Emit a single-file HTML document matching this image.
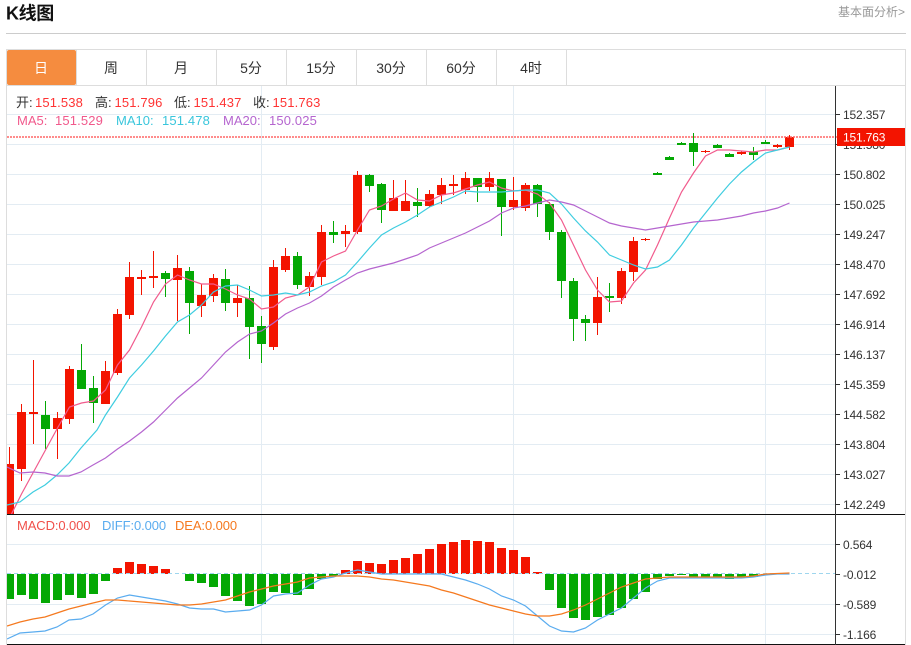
<!DOCTYPE html>
<html lang="zh"><head><meta charset="utf-8"><title>K线图</title>
<style>
html,body{margin:0;padding:0;background:#fff;width:911px;height:645px;overflow:hidden}
svg{display:block;font-family:"Liberation Sans","Noto Sans CJK SC",sans-serif}
</style></head><body>
<svg width="911" height="645" viewBox="0 0 911 645" xmlns="http://www.w3.org/2000/svg">
<defs>
<clipPath id="k"><rect x="7" y="86" width="828" height="428"/></clipPath>
<clipPath id="m"><rect x="7" y="515" width="828" height="129"/></clipPath>
</defs>
<text x="6" y="19.500" font-size="18" font-weight="bold" fill="#111" letter-spacing="-0.4">K线图</text>
<text x="838" y="16" font-size="12" fill="#999">基本面分析&gt;</text>
<path d="M6 33.5H906" stroke="#ccc" stroke-width="1"/>

<!-- frame and tabs -->
<path d="M6.5 50V645M6 49.5H906M905.5 49V645M6 85.5H906" stroke="#ddd" fill="none"/>
<rect x="7" y="50" width="69" height="35" rx="2" fill="#f58c3f"/>
<path d="M76.5 50V85M146.5 50V85M216.5 50V85M286.5 50V85M356.5 50V85M426.5 50V85M496.5 50V85M566.5 50V85" stroke="#ddd"/>
<g font-size="14" fill="#333" text-anchor="middle">
<text x="41" y="73" fill="#fff">日</text>
<text x="111" y="73">周</text>
<text x="181" y="73">月</text>
<text x="251" y="73">5分</text>
<text x="321" y="73">15分</text>
<text x="391" y="73">30分</text>
<text x="461" y="73">60分</text>
<text x="531" y="73">4时</text>
</g>

<!-- grid -->
<path d="M7 114.5H835M7 144.5H835M7 174.5H835M7 204.5H835M7 234.5H835M7 264.5H835M7 294.5H835M7 324.5H835M7 354.5H835M7 384.5H835M7 414.5H835M7 444.5H835M7 474.5H835M7 504.5H835M7 544.5H835M7 604.5H835M7 634.5H835M261.5 86V644M513.5 86V644M765.5 86V644" stroke="#e3ecf3" fill="none"/>

<!-- candles -->
<g clip-path="url(#k)" shape-rendering="crispEdges">
<path fill="none" stroke="#f31400" d="M9.5 447V464M21.5 404V481M33.5 360V444M57.5 412V459M69.5 366V424M105.5 361V404M117.5 309V375M129.5 262V319M141.5 270V295M153.5 251V288M177.5 255V321M201.5 284V317M213.5 274V302M237.5 285V317M273.5 260V350M285.5 248V272M309.5 272V296M321.5 225V285M345.5 225V247M357.5 171V234M393.5 180V211M405.5 180V211M429.5 190V207M441.5 178V204M453.5 175V195M465.5 172V194M489.5 172V191M513.5 177V210M525.5 183V211M597.5 277V335M621.5 268V304M633.5 237V281M645.5 238V241M705.5 150V153M741.5 151V155M777.5 144V148M789.5 135V150"/>
<path fill="#f31400" d="M7 464h7v50h-7zM17 412h9v57h-9zM29 412h9v2h-9zM53 418h9v11h-9zM65 369h9v50h-9zM101 371h9v33h-9zM113 314h9v59h-9zM125 277h9v38h-9zM137 277h9v2h-9zM149 276h9v2h-9zM173 268h9v12h-9zM197 295h9v11h-9zM209 278h9v18h-9zM233 298h9v5h-9zM269 267h9v80h-9zM281 256h9v14h-9zM305 276h9v11h-9zM317 232h9v45h-9zM341 231h9v3h-9zM353 175h9v57h-9zM389 198h9v13h-9zM401 201h9v10h-9zM425 194h9v12h-9zM437 185h9v10h-9zM449 184h9v2h-9zM461 178h9v12h-9zM485 178h9v9h-9zM509 200h9v7h-9zM521 185h9v23h-9zM593 297h9v26h-9zM617 271h9v27h-9zM629 241h9v31h-9zM641 239h9v1h-9zM701 151h9v1h-9zM737 152h9v2h-9zM773 145h9v2h-9zM785 137h9v10h-9z"/>
<path fill="none" stroke="#04a804" d="M45.5 401V449M81.5 344V389M93.5 376V423M165.5 271V297M189.5 267V334M225.5 269V311M249.5 286V359M261.5 316V363M297.5 252V289M333.5 221V243M369.5 174V192M381.5 183V223M417.5 188V217M477.5 178V202M501.5 179V236M537.5 184V217M549.5 202V240M561.5 230V298M573.5 278V341M585.5 315V341M609.5 283V312M657.5 172V175M669.5 156V160M681.5 142V145M693.5 133V166M717.5 144V148M729.5 153V157M753.5 147V160M765.5 140V144"/>
<path fill="#04a804" d="M41 415h9v14h-9zM77 370h9v19h-9zM89 388h9v15h-9zM161 273h9v6h-9zM185 271h9v32h-9zM221 279h9v24h-9zM245 298h9v29h-9zM257 326h9v18h-9zM293 256h9v29h-9zM329 232h9v3h-9zM365 175h9v11h-9zM377 184h9v26h-9zM413 202h9v4h-9zM473 178h9v9h-9zM497 179h9v28h-9zM533 185h9v19h-9zM545 204h9v28h-9zM557 232h9v49h-9zM569 281h9v38h-9zM581 319h9v4h-9zM605 296h9v2h-9zM653 173h9v2h-9zM665 157h9v3h-9zM677 143h9v2h-9zM689 143h9v9h-9zM713 145h9v3h-9zM725 154h9v3h-9zM749 152h9v3h-9zM761 142h9v2h-9z"/>
</g>

<!-- moving averages -->
<g clip-path="url(#k)" fill="none" stroke-width="1.2">
<polyline stroke="#f15b8d" points="9.5,518 21.5,494 33.5,472 45.5,450 57.5,428 69.5,407 81.5,403 93.5,401 105.5,390 117.5,365 129.5,350 141.5,327 153.5,302 165.5,284 177.5,275 189.5,280 201.5,284 213.5,284 225.5,289 237.5,295 249.5,299 261.5,309 273.5,307 285.5,298 297.5,295 309.5,287 321.5,262 333.5,256 345.5,251 357.5,230 369.5,210 381.5,206 393.5,199 405.5,193 417.5,200 429.5,201 441.5,195 453.5,193 465.5,189 477.5,185 489.5,182 501.5,188 513.5,191 525.5,190 537.5,194 549.5,203 561.5,220 573.5,245 585.5,270 597.5,290 609.5,302 621.5,301 633.5,283 645.5,270 657.5,245 669.5,218 681.5,192 693.5,173 705.5,156 717.5,150 729.5,150 741.5,151 753.5,152 765.5,150 777.5,150 789.5,147"/>
<polyline stroke="#3fcde0" points="7,505 20,502 33,492 45,485 57,475 69,463 81,448 97,430 105.5,415 117.5,397 129.5,378 141.5,365 153.5,351 165.5,336 177.5,322 189.5,315 201.5,305 213.5,292 225.5,286 237.5,285 249.5,290 261.5,296 273.5,295 285.5,293 297.5,295 309.5,292 321.5,286 333.5,282 345.5,275 357.5,262 369.5,248 381.5,235 393.5,228 405.5,222 417.5,215 429.5,207 441.5,202 453.5,197 465.5,191 477.5,192 489.5,192 501.5,192 513.5,191 525.5,190 537.5,190 549.5,193 561.5,204 573.5,218 585.5,231 597.5,242 609.5,255 621.5,260 633.5,265 645.5,269 657.5,267 669.5,260 681.5,245 693.5,228 705.5,213 717.5,198 729.5,184 741.5,172 753.5,162 765.5,153 777.5,150 789.5,147"/>
<polyline stroke="#b565cf" points="7,467 20,473 33,472 45,473 57,476 69,476 81,472 93,465 105.5,458 117.5,449 129.5,441 141.5,432 153.5,422 165.5,410 177.5,398 189.5,388 201.5,378 213.5,365 225.5,352 237.5,342 249.5,334 261.5,331 273.5,323 285.5,314 297.5,308 309.5,303 321.5,296 333.5,287 345.5,280 357.5,273 369.5,269 381.5,266 393.5,263 405.5,259 417.5,255 429.5,248 441.5,243 453.5,238 465.5,233 477.5,227 489.5,221 501.5,213 513.5,208 525.5,206 537.5,203 549.5,200 561.5,202 573.5,205 585.5,211 597.5,217 609.5,223 621.5,226 633.5,228 645.5,230 657.5,228 669.5,226 681.5,224 693.5,222 705.5,221 717.5,220 729.5,218 741.5,216 753.5,213 765.5,211 777.5,208 789.5,203"/>
</g>

<!-- current price line -->
<path d="M7 137H837" stroke="#f66" stroke-width="1.5" stroke-dasharray="2 1" fill="none"/>

<!-- MACD -->
<g clip-path="url(#m)" shape-rendering="crispEdges">
<path fill="#04a804" d="M7 574h7v25h-7zM17 574h9v21h-9zM29 574h9v25h-9zM41 574h9v29h-9zM53 574h9v26h-9zM65 574h9v21h-9zM77 574h9v24h-9zM89 574h9v20h-9zM101 574h9v7h-9zM185 574h9v7h-9zM197 574h9v9h-9zM209 574h9v13h-9zM221 574h9v22h-9zM233 574h9v27h-9zM245 574h9v32h-9zM257 574h9v30h-9zM269 574h9v18h-9zM281 574h9v19h-9zM293 574h9v21h-9zM305 574h9v15h-9zM317 574h9v5h-9zM329 574h9v2h-9zM545 574h9v16h-9zM557 574h9v34h-9zM569 574h9v44h-9zM581 574h9v46h-9zM593 574h9v43h-9zM605 574h9v41h-9zM617 574h9v34h-9zM629 574h9v25h-9zM641 574h9v18h-9zM653 574h9v5h-9zM665 574h9v2h-9zM677 574h9v1h-9zM689 574h9v3h-9zM701 574h9v3h-9zM713 574h9v4h-9zM725 574h9v5h-9zM737 574h9v4h-9zM749 574h9v3h-9zM761 574h9v1h-9z"/>
<path fill="#f31400" d="M113 568h9v6h-9zM125 562h9v12h-9zM137 564h9v10h-9zM149 566h9v8h-9zM161 569h9v5h-9zM341 570h9v4h-9zM353 561h9v13h-9zM365 563h9v11h-9zM377 564h9v10h-9zM389 560h9v14h-9zM401 558h9v16h-9zM413 554h9v20h-9zM425 549h9v25h-9zM437 544h9v30h-9zM449 542h9v32h-9zM461 540h9v34h-9zM473 541h9v33h-9zM485 542h9v32h-9zM497 548h9v26h-9zM509 550h9v24h-9zM521 557h9v17h-9zM533 572h9v2h-9z"/>
</g>
<path d="M7 573.5H835" stroke="#9fd6ee" stroke-dasharray="4 3" fill="none"/>
<g clip-path="url(#m)" fill="none" stroke-width="1.2">
<polyline stroke="#5aacef" points="7,639 20,633 33,632 45,631 57,627 69,620 81,619 93,614 105.5,605 117.5,598 129.5,595 141.5,597 153.5,599 165.5,601 177.5,604 189.5,608 201.5,609 213.5,609 225.5,612 237.5,611 249.5,610 261.5,605 273.5,596 285.5,594 297.5,593 309.5,585 321.5,579 333.5,577 345.5,573 357.5,570 369.5,572 381.5,574 393.5,574 405.5,574 417.5,574 429.5,574 441.5,574 453.5,577 465.5,580 477.5,584 489.5,589 501.5,596 513.5,600 525.5,606 537.5,616 549.5,626 561.5,631 573.5,632 585.5,628 597.5,620 609.5,614 621.5,608 633.5,598 645.5,588 657.5,581 669.5,578 681.5,578 693.5,578 705.5,578 717.5,578 729.5,578 741.5,578 753.5,577 765.5,575 777.5,574 789.5,574"/>
<polyline stroke="#f5791f" points="7,626 20,622 33,619 45,617 57,613 69,609 81,606 93,603 105.5,600 117.5,600 129.5,601 141.5,602 153.5,603 165.5,604 177.5,605 189.5,605 201.5,604 213.5,602 225.5,600 237.5,596 249.5,592 261.5,589 273.5,586 285.5,584 297.5,582 309.5,578 321.5,577 333.5,576 345.5,576 357.5,576 369.5,577 381.5,579 393.5,580 405.5,582 417.5,584 429.5,586 441.5,590 453.5,593 465.5,597 477.5,601 489.5,605 501.5,608 513.5,611 525.5,614 537.5,616 549.5,616 561.5,614 573.5,610 585.5,605 597.5,599 609.5,593 621.5,587 633.5,583 645.5,579 657.5,578 669.5,577 681.5,577 693.5,577 705.5,577 717.5,577 729.5,577 741.5,577 753.5,576 765.5,574 789.5,573"/>
</g>

<!-- axes -->
<path d="M7 514.5H905M7 644.5H905" stroke="#111" fill="none"/>
<path d="M835.5 86V645" stroke="#333" fill="none"/>
<path d="M836 114.5h4M836 144.5h4M836 174.5h4M836 204.5h4M836 234.5h4M836 264.5h4M836 294.5h4M836 324.5h4M836 354.5h4M836 384.5h4M836 414.5h4M836 444.5h4M836 474.5h4M836 504.5h4M836 544.5h4M836 574.5h4M836 604.5h4M836 634.5h4" stroke="#333" fill="none"/>
<g font-size="12" fill="#333" letter-spacing="-0.15">
<text x="843" y="119">152.357</text>
<text x="843" y="149">151.580</text>
<text x="843" y="179">150.802</text>
<text x="843" y="209">150.025</text>
<text x="843" y="239">149.247</text>
<text x="843" y="269">148.470</text>
<text x="843" y="299">147.692</text>
<text x="843" y="329">146.914</text>
<text x="843" y="359">146.137</text>
<text x="843" y="389">145.359</text>
<text x="843" y="419">144.582</text>
<text x="843" y="449">143.804</text>
<text x="843" y="479">143.027</text>
<text x="843" y="509">142.249</text>
<text x="843" y="549">0.564</text>
<text x="843" y="579">-0.012</text>
<text x="843" y="609">-0.589</text>
<text x="843" y="639">-1.166</text>
</g>
<rect x="837" y="128" width="68" height="18" fill="#f31400"/>
<text x="843" y="141.500" font-size="12" fill="#fff" letter-spacing="-0.15">151.763</text>

<!-- legends -->
<g font-size="13">
<text x="16" y="107" fill="#333">开:</text><text x="35" y="107" fill="#f33" letter-spacing="0.15">151.538</text>
<text x="95" y="107" fill="#333">高:</text><text x="114.500" y="107" fill="#f33" letter-spacing="0.15">151.796</text>
<text x="174" y="107" fill="#333">低:</text><text x="193.500" y="107" fill="#f33" letter-spacing="0.15">151.437</text>
<text x="253" y="107" fill="#333">收:</text><text x="272.500" y="107" fill="#f33" letter-spacing="0.15">151.763</text>
<text x="17" y="125" fill="#f1598c">MA5:</text><text x="55" y="125" fill="#f1598c" letter-spacing="0.15">151.529</text>
<text x="116" y="125" fill="#39c6dc">MA10:</text><text x="162" y="125" fill="#39c6dc" letter-spacing="0.15">151.478</text>
<text x="223" y="125" fill="#b565cf">MA20:</text><text x="269" y="125" fill="#b565cf" letter-spacing="0.15">150.025</text>
<text x="17" y="530" fill="#f0504a" letter-spacing="-0.1">MACD:0.000</text>
<text x="102" y="530" fill="#5aacef" letter-spacing="-0.1">DIFF:0.000</text>
<text x="175" y="530" fill="#f5791f" letter-spacing="-0.1">DEA:0.000</text>
</g>
</svg>
</body></html>
